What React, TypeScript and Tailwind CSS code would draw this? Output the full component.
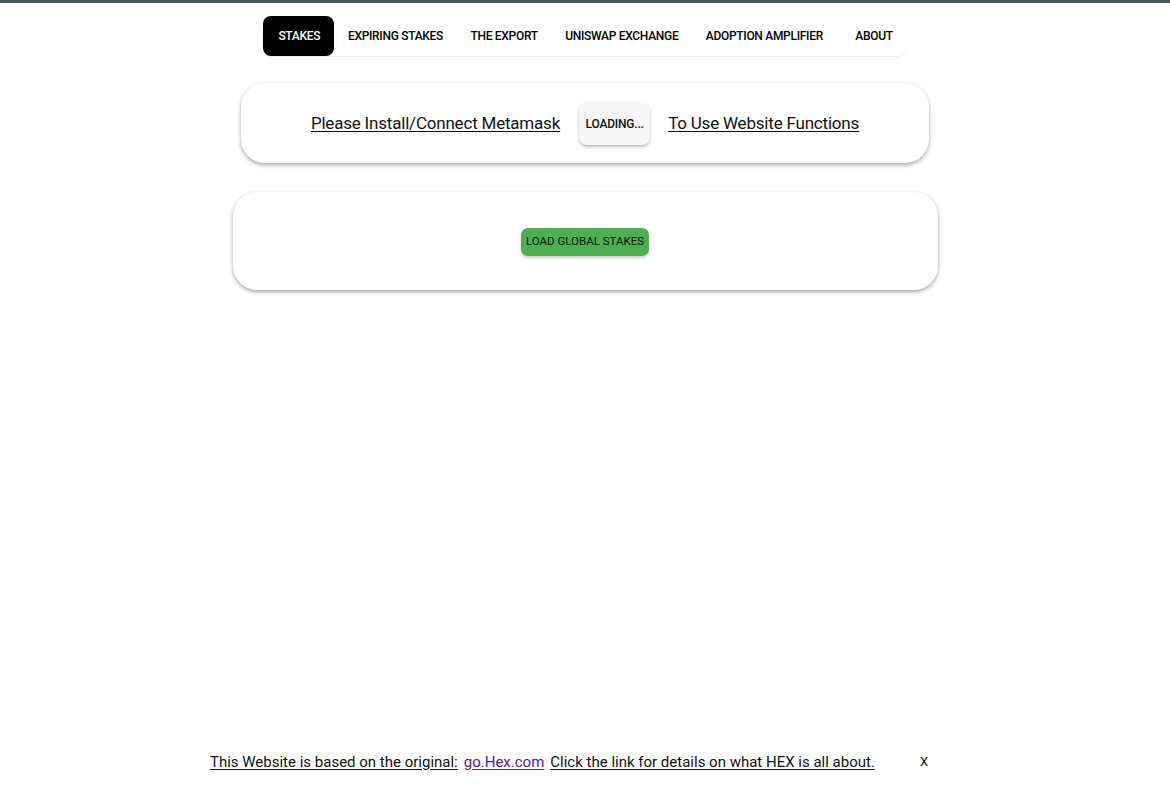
import React from "react";

const tabs = ["STAKES", "EXPIRING STAKES", "THE EXPORT", "UNISWAP EXCHANGE", "ADOPTION AMPLIFIER", "ABOUT"];

export default function App() {
  return (
    <div className="min-h-[790px] w-full bg-white flex flex-col border-t-[3px] border-[#475a62]" style={{ fontFamily: "Roboto, 'Liberation Sans', sans-serif" }}>
      <div className="flex justify-center pt-[13px]">
        <nav className="flex items-stretch h-[40px] rounded-[8px] shadow-[0_1px_1px_rgba(0,0,0,0.08)] ml-[0px]">
          {tabs.map((t, i) => (
            <div
              key={t}
              className={
                "flex items-center justify-center text-[12px] font-medium tracking-[-0.3px] " +
                (i === 0
                  ? "bg-black text-white rounded-[8px] pl-[15px] pr-[14px]"
                  : i === 5
                  ? "text-black w-[70px] pl-[5px]"
                  : "text-black px-[13.7px]")
              }
            >
              {t}
            </div>
          ))}
        </nav>
      </div>

      <div className="flex justify-center mt-[27px]">
        <div className="w-[688px] h-[80px] rounded-[24px] bg-white shadow-[0_2px_4px_rgba(0,0,0,0.35)] flex items-center justify-center gap-[18px] pt-[1px]">
          <span className="text-[17px] tracking-[-0.2px] text-[#111] underline underline-offset-[2px]">Please Install/Connect Metamask</span>
          <div className="w-[71px] h-[43px] rounded-[8px] bg-[#f7f7f7] shadow-[0_2px_3px_rgba(0,0,0,0.25)] flex items-center justify-center text-[12px] font-medium tracking-[-0.2px] text-[#111] ml-[1px]">
            LOADING...
          </div>
          <span className="text-[17px] tracking-[-0.2px] text-[#111] underline underline-offset-[2px]">To Use Website Functions</span>
        </div>
      </div>

      <div className="flex justify-center mt-[29px]">
        <div className="w-[705px] h-[98px] rounded-[24px] bg-white shadow-[0_2px_4px_rgba(0,0,0,0.35)] flex items-center justify-center">
          <div className="h-[28px] px-[5px] rounded-[7px] bg-[#4caf50] shadow-[0_2px_3px_rgba(0,0,0,0.2)] flex items-center text-[11.5px] text-[#111] mt-[1px]">
            LOAD GLOBAL STAKES
          </div>
        </div>
      </div>

      <div className="flex-1" />

      <div className="flex justify-center items-center pb-[17px] text-[15px] text-[#111] pt-[1px] pr-[32px]">
        <span className="underline underline-offset-[2px]">This Website is based on the original:</span>
        <span className="underline underline-offset-[2px] text-[#551a8b] ml-[6px]">go.Hex.com</span>
        <span className="underline underline-offset-[2px] ml-[6px]">Click the link for details on what HEX is all about.</span>
        <span className="ml-[45px] text-[13px]">X</span>
      </div>
    </div>
  );
}
